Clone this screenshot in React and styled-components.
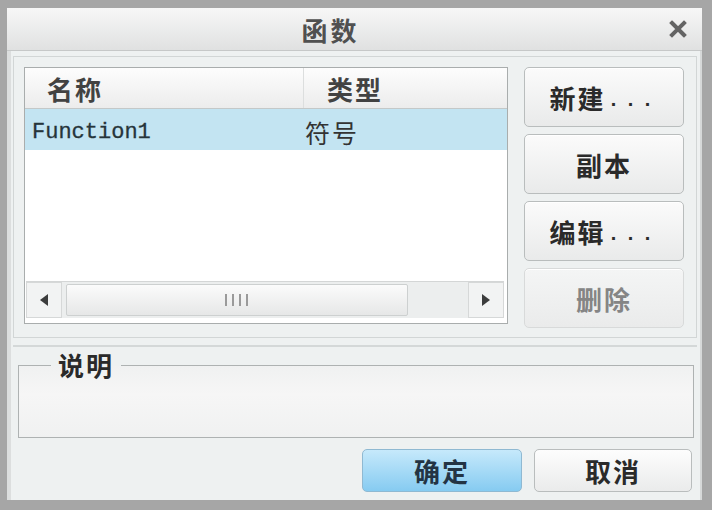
import styled, { createGlobalStyle } from "styled-components";

const GlobalStyle = createGlobalStyle`
  html, body {
    margin: 0;
    padding: 0;
    background: #a9a9a9;
  }
  * {
    box-sizing: border-box;
  }
`;

const cjk = `"Noto Sans CJK SC", "Noto Sans", sans-serif`;

const functions = [{ name: "Function1", type: "符号" }];

const App = () => {
  return (
    <>
      <GlobalStyle />
      <Window>
        <TitleBar>
          <Title>函数</Title>
          <CloseButton aria-label="close">
            <svg width="18" height="18" viewBox="0 0 18 18">
              <path d="M3 3 L15 15 M15 3 L3 15" stroke="#646464" strokeWidth="4" strokeLinecap="square" />
            </svg>
          </CloseButton>
        </TitleBar>
        <Body>
          <Panel>
            <ListBox>
              <HeaderRow>
                <HeaderCell>名称</HeaderCell>
                <HeaderCell $divider>类型</HeaderCell>
              </HeaderRow>
              {functions.map((f) => (
                <Row key={f.name} $selected>
                  <NameCell>{f.name}</NameCell>
                  <TypeCell>{f.type}</TypeCell>
                </Row>
              ))}
              <Filler />
              <ScrollBar>
                <ArrowButton>
                  <svg width="10" height="14" viewBox="0 0 10 14">
                    <path d="M9 1 L1 7 L9 13 Z" fill="#3c3c3c" />
                  </svg>
                </ArrowButton>
                <Track>
                  <Thumb>
                    <svg width="26" height="14" viewBox="0 0 26 14">
                      <path d="M2 1 V13 M9 1 V13 M16 1 V13 M23 1 V13" stroke="#9a9a9a" strokeWidth="2" />
                    </svg>
                  </Thumb>
                </Track>
                <ArrowButton>
                  <svg width="10" height="14" viewBox="0 0 10 14">
                    <path d="M1 1 L9 7 L1 13 Z" fill="#3c3c3c" />
                  </svg>
                </ArrowButton>
              </ScrollBar>
            </ListBox>
            <ButtonColumn>
              <SideButton>新建<Dots>...</Dots></SideButton>
              <SideButton>副本</SideButton>
              <SideButton>编辑<Dots>...</Dots></SideButton>
              <SideButton disabled>删除</SideButton>
            </ButtonColumn>
          </Panel>
          <Separator />
          <Group>
            <Legend>说明</Legend>
            <GroupInner />
          </Group>
          <Footer>
            <DialogButton $primary>确定</DialogButton>
            <DialogButton $width={158}>取消</DialogButton>
          </Footer>
        </Body>
      </Window>
    </>
  );
};

export default App;

const Window = styled.div`
  width: 712px;
  height: 510px;
  display: flex;
  flex-direction: column;
  background: #eef1f1;
  border-style: solid;
  border-color: #a6a6a6;
  border-width: 8px 10px 10px 7px;
  box-shadow: inset 4px 0 0 #dcdede, inset -2px 0 0 #d6d8d8;
`;

const TitleBar = styled.div`
  height: 43px;
  display: flex;
  align-items: center;
  background: linear-gradient(#f7f7f7, #e0e1e1);
  border-bottom: 1px solid #c6c8c8;
`;

const Title = styled.div`
  flex: 1;
  text-align: center;
  font-family: ${cjk};
  font-weight: 700;
  font-size: 26px;
  letter-spacing: 3px;
  color: #505050;
`;

const CloseButton = styled.div`
  width: 48px;
  height: 42px;
  display: flex;
  align-items: center;
  justify-content: center;
`;

const Body = styled.div`
  flex: 1;
  display: flex;
  flex-direction: column;
  padding: 5px 5px 9px 6px;
`;

const Panel = styled.div`
  height: 282px;
  display: flex;
  gap: 16px;
  padding: 10px 12px 9px 10px;
  border: 1px solid #d2d6d6;
`;

const ListBox = styled.div`
  width: 484px;
  height: 257px;
  display: flex;
  flex-direction: column;
  background: #fff;
  border: 1px solid #a9adad;
`;

const HeaderRow = styled.div`
  height: 41px;
  display: grid;
  grid-template-columns: 278px 1fr;
  background: linear-gradient(#fdfdfd, #ececec);
  border-bottom: 1px solid #c4c8c8;
`;

const HeaderCell = styled.div`
  display: flex;
  align-items: center;
  padding-left: ${(p) => (p.$divider ? "23px" : "22px")};
  border-left: ${(p) => (p.$divider ? "1px solid #dcdede" : "none")};
  font-family: ${cjk};
  font-weight: 700;
  font-size: 26px;
  letter-spacing: 2px;
  color: #424242;
`;

const Row = styled.div`
  height: 41px;
  display: grid;
  grid-template-columns: 278px 1fr;
  align-items: center;
  padding-top: 5px;
  background: ${(p) => (p.$selected ? "#c3e4f2" : "transparent")};
`;

const NameCell = styled.div`
  padding-left: 7px;
  font-family: "Liberation Mono", "DejaVu Sans Mono", monospace;
  font-size: 22px;
  color: #26343a;
  -webkit-text-stroke: 0.3px #26343a;
`;

const TypeCell = styled.div`
  padding-left: 2px;
  font-family: ${cjk};
  font-size: 25px;
  letter-spacing: 2px;
  color: #333;
`;

const Filler = styled.div`
  flex: 1;
`;

const ScrollBar = styled.div`
  height: 37px;
  display: flex;
  margin: 0 3px 5px 1px;
  border-top: 1px solid #d4d6d6;
`;

const ArrowButton = styled.div`
  width: 36px;
  display: flex;
  align-items: center;
  justify-content: center;
  background: #f2f3f3;
  border: 1px solid #d6d8d8;
`;

const Track = styled.div`
  flex: 1;
  display: flex;
  padding: 2px 0 2px 4px;
  background: #eceeee;
`;

const Thumb = styled.div`
  width: 342px;
  display: flex;
  align-items: center;
  justify-content: center;
  background: linear-gradient(#fbfbfb, #e6e7e7);
  border: 1px solid #cdd0d0;
  border-radius: 2px;
`;

const ButtonColumn = styled.div`
  width: 160px;
  display: flex;
  flex-direction: column;
  gap: 7px;
`;

const SideButton = styled.button`
  height: 60px;
  display: flex;
  align-items: center;
  justify-content: center;
  padding: 0;
  font-family: ${cjk};
  font-weight: 700;
  font-size: 26px;
  letter-spacing: 2px;
  color: #2a2a2a;
  background: linear-gradient(#fbfbfb, #e9eaea);
  border: 1px solid #b9bdbd;
  border-radius: 5px;
  box-shadow: inset 0 1px 0 #fff;

  &:disabled {
    color: #858585;
    background: linear-gradient(#f4f5f5, #eaebeb);
    border-color: #d8dada;
  }
`;

const Dots = styled.span`
  font-family: "Liberation Mono", monospace;
  font-weight: 700;
  font-size: 20px;
  letter-spacing: 5px;
  margin-left: 2px;
  padding-top: 6px;
`;

const Separator = styled.div`
  height: 2px;
  margin-top: 7px;
  background: #d4d8d8;
`;

const Group = styled.fieldset`
  margin: 4px 3px 0 5px;
  padding: 0;
  border: 1px solid #aeb2b2;
  background: linear-gradient(#f0f1f1, #f6f6f6 40%, #f0f1f1);
`;

const Legend = styled.legend`
  margin-left: 32px;
  padding: 0 7px;
  font-family: ${cjk};
  font-weight: 700;
  font-size: 26px;
  line-height: 28px;
  letter-spacing: 2px;
  color: #2a2a2a;
`;

const GroupInner = styled.div`
  height: 58px;
`;

const Footer = styled.div`
  display: flex;
  justify-content: flex-end;
  gap: 12px;
  margin-top: 11px;
  padding-right: 5px;
`;

const DialogButton = styled.button`
  width: ${(p) => p.$width || 160}px;
  height: 43px;
  padding: 0;
  font-family: ${cjk};
  font-weight: 700;
  font-size: 26px;
  letter-spacing: 2px;
  color: ${(p) => (p.$primary ? "#243444" : "#2a2a2a")};
  background: ${(p) =>
    p.$primary ? "linear-gradient(#c6e9fb, #86cbf1)" : "linear-gradient(#fdfdfd, #eaebeb)"};
  border: 1px solid ${(p) => (p.$primary ? "#8fb9d2" : "#b9bdbd")};
  border-radius: 5px;
`;
